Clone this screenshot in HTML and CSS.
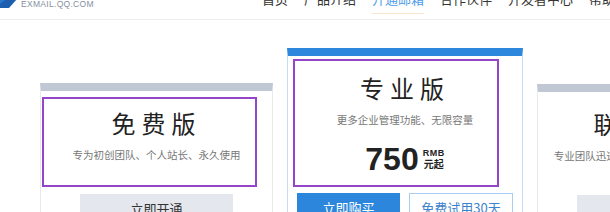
FILE: index.html
```
<!DOCTYPE html>
<html lang="zh-CN">
<head>
    <meta charset="UTF-8">
    <meta name="viewport" content="width=device-width, initial-scale=1.0">
    <title>腾讯企业邮箱 - 开通邮箱</title>
    <link rel="stylesheet" href="styles.css">
</head>
<body>
    <div class="header">
        <div class="header-row">
            <div class="logo">
                <svg class="logo-icon" width="18" height="12" viewBox="0 0 18 12">
                    <rect x="0" y="0" width="17" height="12" fill="#1d5fae"></rect>
                    <polygon points="17,3 17,12 9,12" fill="#ffffff"></polygon>
                    <polygon points="0,0 10,0 0,8" fill="#2a78c9"></polygon>
                </svg>
                <span class="logo-text">EXMAIL.QQ.COM</span>
            </div>
            <div class="nav">
                <a href="#">首页</a>
                <a href="#">产品介绍</a>
                <a href="#" class="active">开通邮箱</a>
                <a href="#">合作伙伴</a>
                <a href="#">开发者中心</a>
                <a href="#">帮助中心</a>
            </div>
        </div>
    </div>

    <div class="plans">
        <div class="plan plan-side">
            <div class="highlight highlight-free"></div>
            <h3 class="plan-title">免费版</h3>
            <p class="plan-desc">专为初创团队、个人站长、永久使用</p>
            <div class="plan-actions">
                <a href="#" class="btn btn-gray">立即开通</a>
            </div>
        </div>

        <div class="plan plan-pro">
            <div class="highlight highlight-pro"></div>
            <h3 class="plan-title">专业版</h3>
            <p class="plan-desc">更多企业管理功能、无限容量</p>
            <div class="price">
                <span class="price-num">750</span>
                <span class="price-unit"><b>RMB</b><b>元起</b></span>
            </div>
            <div class="plan-actions">
                <a href="#" class="btn btn-blue">立即购买</a>
                <a href="#" class="btn btn-outline">免费试用30天</a>
            </div>
        </div>

        <div class="plan plan-side plan-right">
            <h3 class="plan-title">联合办公</h3>
            <p class="plan-desc">专业团队迅速协作，邮件、通讯一站式搞定</p>
            <div class="plan-actions">
                <a href="#" class="btn btn-gray">立即开通</a>
            </div>
        </div>
    </div>
</body>
</html>
```

FILE: styles.css
```
* {
    box-sizing: border-box;
}

body {
    margin: 0;
    background-color: #ffffff;
    font-family: "Noto Sans CJK SC", "Noto Sans", sans-serif;
    color: #333;
    overflow: hidden;
}

a {
    text-decoration: none;
}

/* header */
.header {
    display: flow-root;
    height: 20px;
    border-bottom: 1px solid #eceef1;
}

.header-row {
    display: flex;
    align-items: flex-start;
    margin-top: -5px;
}

.logo {
    width: 262px;
    flex: none;
    display: flex;
    align-items: flex-end;
    height: 13px;
}

.logo-icon {
    display: block;
    margin-right: 3px;
}

.logo-text {
    font-family: "Liberation Sans", Arial, sans-serif;
    font-size: 8.5px;
    line-height: 8px;
    letter-spacing: 0.3px;
    color: #8590a0;
    margin-bottom: 0;
}

.nav {
    display: flex;
    gap: 16px;
    margin-top: -3px;
    white-space: nowrap;
}

.nav a {
    font-size: 13px;
    line-height: 14px;
    color: #333;
    padding-bottom: 7px;
    border-bottom: 1px solid transparent;
}

.nav a.active {
    color: #4d9de8;
    border-bottom-color: #fbe6cd;
}

/* plans */
.plans {
    display: flex;
    align-items: flex-start;
    gap: 14px;
    margin-top: 28px;
    padding-left: 40px;
}

.plan {
    position: relative;
    flex: none;
    text-align: center;
    padding: 17px 0 0;
    border: 1px solid #e6eaef;
    border-top: 8px solid #bfc8d3;
}

.plan-side {
    width: 233px;
    margin-top: 35px;
}

.plan-right {
    margin-top: 36px;
}

.plan-pro {
    width: 236px;
    border-color: #c3dbf3;
    border-top-color: #2d87dd;
}

.plan-title {
    margin: 0;
    font-size: 24px;
    line-height: 30px;
    font-weight: normal;
    letter-spacing: 6px;
    color: #222;
}

.plan-desc {
    margin: 9px 0 0;
    font-size: 10.5px;
    line-height: 16px;
    color: #777;
    white-space: nowrap;
}

.price {
    display: flex;
    justify-content: center;
    align-items: center;
    gap: 4px;
    margin-top: 15px;
    color: #222;
}

.price-num {
    font-family: "Liberation Sans", Arial, sans-serif;
    font-size: 32px;
    line-height: 32px;
    font-weight: bold;
}

.price-unit {
    display: flex;
    flex-direction: column;
    align-items: center;
}

.price-unit b:first-child {
    font-family: "Liberation Sans", Arial, sans-serif;
    font-size: 9px;
    line-height: 10px;
    letter-spacing: 0.5px;
}

.price-unit b:last-child {
    font-size: 10px;
    line-height: 12px;
}

.plan-actions {
    display: flex;
    justify-content: center;
    gap: 9px;
    margin-top: 31px;
    padding-bottom: 20px;
}

.plan-pro .plan-actions {
    margin-top: 18px;
}

.btn {
    display: block;
    height: 30px;
    font-size: 13px;
    line-height: 30px;
}

.btn-gray {
    width: 153px;
    background-color: #e4e8ee;
    color: #333;
}

.btn-blue {
    width: 103px;
    background-color: #2c87dc;
    color: #fff;
}

.btn-outline {
    width: 104px;
    border: 1px solid #a9cdf0;
    line-height: 28px;
    color: #3c82cc;
}

/* purple marker boxes drawn over the plan intro */
.highlight {
    position: absolute;
    border: 2px solid #9446c8;
    pointer-events: none;
}

.highlight-free {
    left: 1px;
    top: 6px;
    width: 215px;
    height: 90px;
}

.highlight-pro {
    left: 5px;
    top: 3px;
    width: 206px;
    height: 128px;
}
```
